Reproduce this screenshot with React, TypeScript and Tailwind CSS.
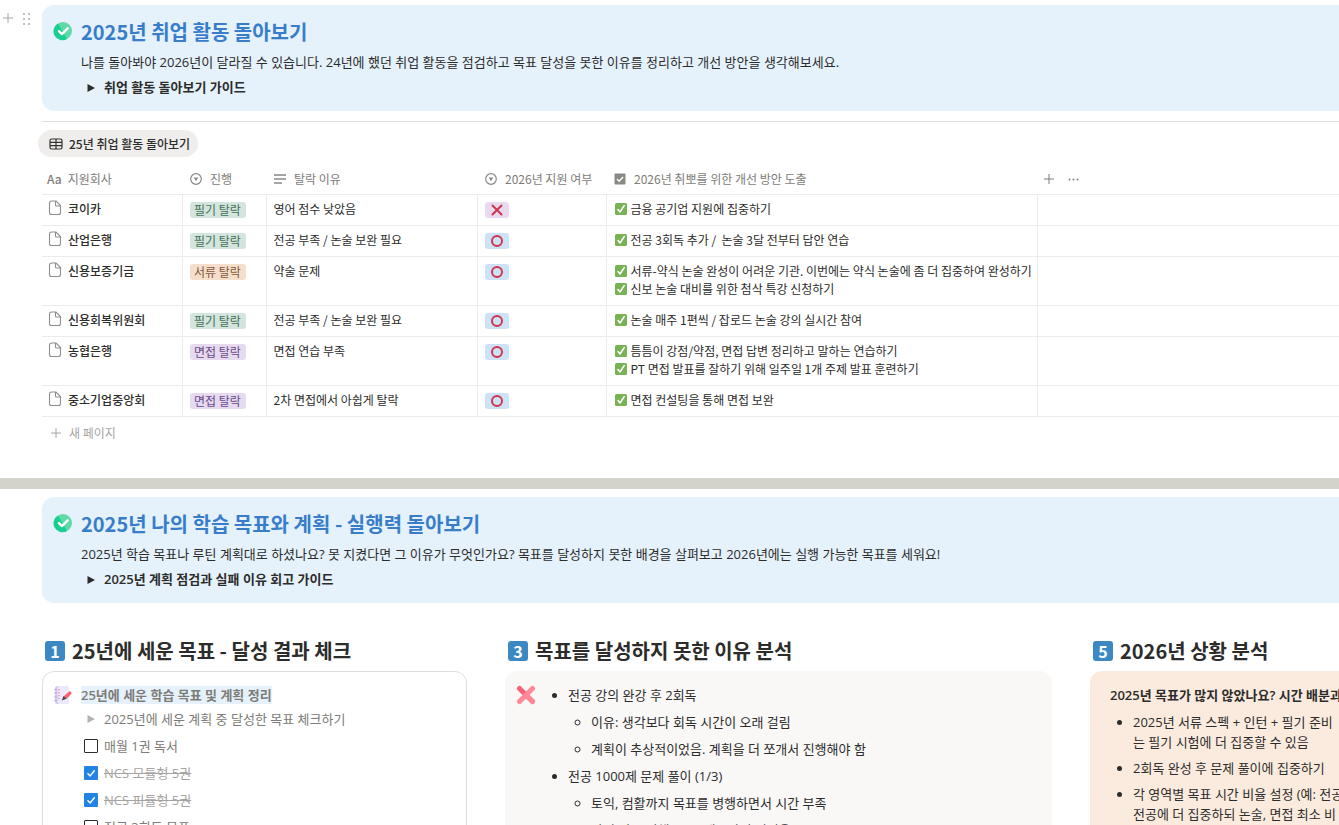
import type { ReactNode } from 'react';

type TagColor = 'green' | 'orange' | 'purple';

const tagStyles: Record<TagColor, string> = {
    green: 'bg-[#d3e5dc] text-[#44705a]',
    orange: 'bg-[#f5dfcc] text-[#85583a]',
    purple: 'bg-[#e6daf1] text-[#6a4a86]',
};

const rows: { company: string; status: string; color: TagColor; reason: string; apply: boolean; plans: string[] }[] = [
    { company: '코이카', status: '필기 탈락', color: 'green', reason: '영어 점수 낮았음', apply: false, plans: ['금융 공기업 지원에 집중하기'] },
    { company: '산업은행', status: '필기 탈락', color: 'green', reason: '전공 부족 / 논술 보완 필요', apply: true, plans: ['전공 3회독 추가 /  논술 3달 전부터 답안 연습'] },
    {
        company: '신용보증기금',
        status: '서류 탈락',
        color: 'orange',
        reason: '약술 문제',
        apply: true,
        plans: ['서류-약식 논술 완성이 어려운 기관. 이번에는 약식 논술에 좀 더 집중하여 완성하기', '신보 논술 대비를 위한 첨삭 특강 신청하기'],
    },
    { company: '신용회복위원회', status: '필기 탈락', color: 'green', reason: '전공 부족 / 논술 보완 필요', apply: true, plans: ['논술 매주 1편씩 / 잡로드 논술 강의 실시간 참여'] },
    {
        company: '농협은행',
        status: '면접 탈락',
        color: 'purple',
        reason: '면접 연습 부족',
        apply: true,
        plans: ['틈틈이 강점/약점, 면접 답변 정리하고 말하는 연습하기', 'PT 면접 발표를 잘하기 위해 일주일 1개 주제 발표 훈련하기'],
    },
    { company: '중소기업중앙회', status: '면접 탈락', color: 'purple', reason: '2차 면접에서 아쉽게 탈락', apply: true, plans: ['면접 컨설팅을 통해 면접 보완'] },
];

const goals = [
    { id: 'reading', label: '매월 1권 독서', done: false },
    { id: 'ncs-module', label: 'NCS 모듈형 5권', done: true },
    { id: 'ncs-pdul', label: 'NCS 피듈형 5권', done: true },
    { id: 'major', label: '전공 3회독 목표', done: false },
];

const CheckCircle = () => (
    <svg viewBox="0 0 20 20" className="mt-[1px] size-5 shrink-0">
        <circle cx="10" cy="10" r="9" fill="#5fdaa6" />
        <path d="M5 2.5a9 9 0 0 0 9 15.6z" fill="#17cf90" />
        <path d="M6 10.2l2.9 2.9 5.8-5.8" fill="none" stroke="#fff" strokeWidth="2.4" strokeLinecap="round" strokeLinejoin="round" />
    </svg>
);

const Notebook = () => (
    <svg viewBox="0 0 20 20" className="size-5 shrink-0">
        <rect x="2" y="1" width="13.5" height="18" rx="2.5" fill="#cfc8f2" />
        <rect x="4.5" y="1" width="11" height="18" rx="2" fill="#eceafa" />
        <path d="M1.5 4.5h2M1.5 8h2M1.5 12h2M1.5 15.5h2" stroke="#b9b1e6" strokeWidth="1" strokeLinecap="round" />
        <path d="M6 4v10" stroke="#ee7f9b" strokeWidth="1.3" strokeDasharray="1.3 1.7" />
        <path d="M10.5 11.5l5-4.6a1.7 1.7 0 0 1 2.5 2.4l-4.6 4.8z" fill="#f4636f" />
        <path d="M10.5 11l2.9 2.8-4.6 1.8z" fill="#4a3b59" />
    </svg>
);

const CrossMark = () => (
    <svg viewBox="0 0 20 20" className="size-5 shrink-0">
        <path d="M3.5 3.5l13 13" stroke="#fb5f76" strokeWidth="5" strokeLinecap="round" />
        <path d="M16.5 3.5l-13 13" stroke="#fd8997" strokeWidth="5" strokeLinecap="round" />
        <path d="M10 10l6.5 6.5" stroke="#fd8997" strokeWidth="5" strokeLinecap="round" />
    </svg>
);

const GreenCheck = () => (
    <svg viewBox="0 0 12 12" className="mr-1 inline-block size-3 align-[-1px]">
        <rect width="12" height="12" rx="1.5" fill="#77b255" />
        <path d="M3 6.6l2 2.4 4.2-6.4" fill="none" stroke="#fff" strokeWidth="1.6" strokeLinecap="round" strokeLinejoin="round" />
    </svg>
);

const PageIcon = () => (
    <svg viewBox="0 0 14 16" className="h-4 w-[14px] shrink-0" fill="none" stroke="#8f8e8b" strokeWidth="1.1">
        <path d="M3.5 1H8l4.5 4.5v7a2 2 0 0 1-2 2h-7a2 2 0 0 1-2-2V3a2 2 0 0 1 2-2z" />
        <path d="M7.5 1v4a1 1 0 0 0 1 1h4" />
    </svg>
);

const SelectIcon = () => (
    <svg viewBox="0 0 12 12" className="size-3">
        <circle cx="6" cy="6" r="5.3" fill="none" stroke="#8a8986" strokeWidth="1.2" />
        <path d="M3.7 4.6h4.6L6 8.2z" fill="#8a8986" />
    </svg>
);

const TextIcon = () => (
    <svg viewBox="0 0 12 12" className="size-3">
        <path d="M0 2h12M0 6h12M0 10h8" stroke="#8a8986" strokeWidth="1.3" />
    </svg>
);

const CheckboxIcon = () => (
    <svg viewBox="0 0 12 12" className="size-3">
        <rect x=".5" y=".5" width="11" height="11" rx="1" fill="#8a8986" />
        <path d="M3 6.1l2.1 2.1 4-4.2" fill="none" stroke="#fff" strokeWidth="1.4" />
    </svg>
);

const TableIcon = () => (
    <svg viewBox="0 0 14 12" className="h-3 w-[14px]" fill="none" stroke="#32302c" strokeWidth="1.2">
        <rect x="1" y="1" width="12" height="10" rx="1.5" />
        <path d="M1 4.3h12M1 7.7h12M7 1v10" />
    </svg>
);

const PlusIcon = () => (
    <svg viewBox="0 0 10 10" className="size-[10px]">
        <path d="M5 0v10M0 5h10" stroke="currentColor" />
    </svg>
);

const Triangle = () => (
    <svg viewBox="0 0 8 8" className="size-2" fill="currentColor">
        <path d="M.5 0L8 4 .5 8z" />
    </svg>
);

const Callout = ({ title, text, guide }: { title: string; text: string; guide: string }) => (
    <div className="flex h-[106px] gap-2 rounded-l-xl bg-[#e5f2fc] pt-[15px] pl-[11px]">
        <CheckCircle />
        <div className="whitespace-nowrap">
            <h2 className="text-xl leading-6 font-semibold text-[#387dc9]">{title}</h2>
            <p className="mt-2 font-['Open_Sans','Noto_Sans_CJK_KR',sans-serif] text-[13px] leading-5">{text}</p>
            <button className="mt-1 flex h-6 items-center gap-[9px] pl-[6px] font-['Open_Sans','Noto_Sans_CJK_KR',sans-serif] text-[13px] font-semibold">
                <Triangle />
                {guide}
            </button>
        </div>
    </div>
);

const ColumnTitle = ({ num, children }: { num: number; children: ReactNode }) => (
    <h3 className="flex h-6 items-center gap-[7px] pl-[3px] font-['Noto_Sans_CJK_KR','Noto_Sans_CJK_SC',sans-serif] text-xl font-semibold whitespace-nowrap">
        <span className="flex size-5 items-center justify-center rounded-[3px] bg-[#3b88c3] text-base leading-none font-bold text-white">{num}</span>
        {children}
    </h3>
);

const HeaderCell = ({ icon, children }: { icon: ReactNode; children: ReactNode }) => (
    <th className="pl-2 font-normal">
        <span className="flex items-center gap-2">
            {icon}
            {children}
        </span>
    </th>
);

const App = () => {
    return (
        <main className="h-screen overflow-hidden bg-white pt-[5px] font-['Noto_Sans_CJK_KR','Noto_Sans_CJK_SC',sans-serif] text-[#2c2c2b]">
            <section className="flex">
                <div className="flex w-[42px] shrink-0 items-start gap-[9px] pt-2 pl-[3px] text-[#a5a4a1]">
                    <button aria-label="블록 추가">
                        <PlusIcon />
                    </button>
                    <button aria-label="블록 이동">
                        <svg viewBox="0 0 8 12" className="h-3 w-2" fill="currentColor">
                            <circle cx="2" cy="1" r=".9" />
                            <circle cx="7" cy="1" r=".9" />
                            <circle cx="2" cy="6" r=".9" />
                            <circle cx="7" cy="6" r=".9" />
                            <circle cx="2" cy="11" r=".9" />
                            <circle cx="7" cy="11" r=".9" />
                        </svg>
                    </button>
                </div>
                <div className="min-w-0 flex-1">
                    <Callout
                        title="2025년 취업 활동 돌아보기"
                        text="나를 돌아봐야 2026년이 달라질 수 있습니다. 24년에 했던 취업 활동을 점검하고 목표 달성을 못한 이유를 정리하고 개선 방안을 생각해보세요."
                        guide="취업 활동 돌아보기 가이드"
                    />
                    <hr className="mt-[10px] border-[#e0e0de]" />
                </div>
            </section>

            {/* Database view */}
            <section className="pt-2 pl-[42px]">
                <button className="-ml-1 flex h-[27px] items-center gap-[6px] rounded-full bg-[#efeeec] pr-2 pl-[11px] text-xs font-medium">
                    <TableIcon />
                    25년 취업 활동 돌아보기
                </button>

                <table className="mt-2 w-full table-fixed border-collapse text-left text-xs leading-[18px] whitespace-nowrap">
                    <colgroup>
                        <col className="w-[140px]" />
                        <col className="w-[84px]" />
                        <col className="w-[211px]" />
                        <col className="w-[129px]" />
                        <col className="w-[431px]" />
                        <col />
                    </colgroup>
                    <thead>
                        <tr className="h-[29px] border-b border-[#ebebe9] text-[#7d7c78]">
                            <th className="pl-[5px] font-normal">
                                <span className="flex items-center gap-[6px]">
                                    <span className="font-medium">Aa</span>
                                    지원회사
                                </span>
                            </th>
                            <HeaderCell icon={<SelectIcon />}>진행</HeaderCell>
                            <HeaderCell icon={<TextIcon />}>탈락 이유</HeaderCell>
                            <HeaderCell icon={<SelectIcon />}>2026년 지원 여부</HeaderCell>
                            <HeaderCell icon={<CheckboxIcon />}>2026년 취뽀를 위한 개선 방안 도출</HeaderCell>
                            <th className="pl-[7px]">
                                <span className="flex items-center gap-[14px]">
                                    <button aria-label="속성 추가">
                                        <PlusIcon />
                                    </button>
                                    <button aria-label="더 보기">
                                        <svg viewBox="0 0 11 3" className="h-[3px] w-[11px]" fill="currentColor">
                                            <circle cx="1.5" cy="1.5" r="1" />
                                            <circle cx="5.5" cy="1.5" r="1" />
                                            <circle cx="9.5" cy="1.5" r="1" />
                                        </svg>
                                    </button>
                                </span>
                            </th>
                        </tr>
                    </thead>
                    <tbody>
                        {rows.map((row) => (
                            <tr key={row.company} className="border-b border-[#ebebe9] align-top">
                                <td className="border-r border-[#ebebe9] pt-[5px] pb-[7px] pl-[6px]">
                                    <span className="flex gap-[6px] font-medium">
                                        <PageIcon />
                                        {row.company}
                                    </span>
                                </td>
                                <td className="border-r border-[#ebebe9] px-[7px] pt-[6px]">
                                    <span className={`mt-[1px] flex h-4 w-14 items-center justify-center rounded-[3px] ${tagStyles[row.color]}`}>{row.status}</span>
                                </td>
                                <td className="border-r border-[#ebebe9] px-[7px] pt-[5px] pb-[7px]">{row.reason}</td>
                                <td className="border-r border-[#ebebe9] px-[7px] pt-[6px]">
                                    <span className={`mt-[1px] flex h-4 w-6 items-center justify-center rounded-[3px] ${row.apply ? 'bg-[#cce3f6]' : 'bg-[#e9daf1]'}`}>
                                        <svg viewBox="0 0 12 12" className="size-3" fill="none" stroke="#cf3550" strokeWidth="2">
                                            {row.apply ? <circle cx="6" cy="6" r="5" /> : <path d="M1.5 1.5l9 9M10.5 1.5l-9 9" strokeLinecap="round" />}
                                        </svg>
                                    </span>
                                </td>
                                <td className="border-r border-[#ebebe9] px-2 pt-[5px] pb-[7px]">
                                    {row.plans.map((plan) => (
                                        <p key={plan} className="whitespace-pre">
                                            <GreenCheck />
                                            {plan}
                                        </p>
                                    ))}
                                </td>
                                <td />
                            </tr>
                        ))}
                    </tbody>
                </table>
                <button className="flex h-8 items-center gap-2 pl-[9px] text-xs text-[#a5a4a1]">
                    <PlusIcon />
                    새 페이지
                </button>
            </section>

            <div className="mt-[29px] h-[11px] bg-[#d3d3cb]" />

            <section className="pt-2 pl-[42px]">
                <Callout
                    title="2025년 나의 학습 목표와 계획 - 실행력 돌아보기"
                    text="2025년 학습 목표나 루틴 계획대로 하셨나요? 못 지켰다면 그 이유가 무엇인가요? 목표를 달성하지 못한 배경을 살펴보고 2026년에는 실행 가능한 목표를 세워요!"
                    guide="2025년 계획 점검과 실패 이유 회고 가이드"
                />

                <div className="mt-9 flex gap-[38px] font-['Open_Sans','Noto_Sans_CJK_KR',sans-serif] text-[13px] leading-5">
                    <div className="w-[425px] shrink-0">
                        <ColumnTitle num={1}>25년에 세운 목표 - 달성 결과 체크</ColumnTitle>
                        <div className="mt-2 flex gap-2 rounded-xl border border-[#dededc] py-[13px] pl-[10px] text-[#7d7c78]">
                            <Notebook />
                            <div>
                                <h4 className="font-semibold">
                                    <mark className="bg-[#e5f2fc] text-[#7d7c78]">25년에 세운 학습 목표 및 계획 정리</mark>
                                </h4>
                                <button className="mt-[2px] flex h-6 items-center gap-[9px] pl-[6px]">
                                    <span className="text-[#b3b2af]">
                                        <Triangle />
                                    </span>
                                    2025년에 세운 계획 중 달성한 목표 체크하기
                                </button>
                                {goals.map((goal) => (
                                    <label key={goal.id} htmlFor={goal.id} className="mt-[3px] flex h-6 items-center gap-[6px] pl-[3px]">
                                        <span className="grid size-[14px]">
                                            <input
                                                id={goal.id}
                                                type="checkbox"
                                                defaultChecked={goal.done}
                                                className="peer col-start-1 row-start-1 size-[14px] appearance-none rounded-[1px] border border-[#2c2c2b] checked:border-0 checked:bg-[#2383e2]"
                                            />
                                            <svg viewBox="0 0 14 14" className="pointer-events-none invisible col-start-1 row-start-1 peer-checked:visible" fill="none" stroke="#fff" strokeWidth="1.4">
                                                <path d="M3.5 7.3l2.6 2.6 4.6-5.6" />
                                            </svg>
                                        </span>
                                        <span className={goal.done ? 'text-[#a5a4a1] line-through' : ''}>{goal.label}</span>
                                    </label>
                                ))}
                            </div>
                        </div>
                    </div>

                    <div className="w-[547px] shrink-0">
                        <ColumnTitle num={3}>목표를 달성하지 못한 이유 분석</ColumnTitle>
                        <div className="mt-2 flex gap-[10px] rounded-xl bg-[#f9f8f7] py-[14px] pl-[11px]">
                            <CrossMark />
                            <ul className="list-disc space-y-[7px] pl-[22px]">
                                <li>
                                    전공 강의 완강 후 2회독
                                    <ul className="mt-[7px] list-[circle] space-y-[7px] pl-[23px]">
                                        <li>이유: 생각보다 회독 시간이 오래 걸림</li>
                                        <li>계획이 추상적이었음. 계획을 더 쪼개서 진행해야 함</li>
                                    </ul>
                                </li>
                                <li>
                                    전공 1000제 문제 풀이 (1/3)
                                    <ul className="mt-[7px] list-[circle] space-y-[7px] pl-[23px]">
                                        <li>토익, 컴활까지 목표를 병행하면서 시간 부족</li>
                                        <li>아직 전공 이해 부족, 재무관리 어려움</li>
                                    </ul>
                                </li>
                            </ul>
                        </div>
                    </div>

                    <div className="min-w-0 flex-1 whitespace-nowrap">
                        <ColumnTitle num={5}>2026년 상황 분석</ColumnTitle>
                        <div className="mt-2 overflow-hidden rounded-l-xl bg-[#fbebde] py-[14px] pl-5">
                            <h4 className="font-semibold">2025년 목표가 많지 않았나요? 시간 배분과</h4>
                            <ul className="mt-[7px] list-disc space-y-[6px] pl-[23px]">
                                <li>
                                    2025년 서류 스펙 + 인턴 + 필기 준비
                                    <br />는 필기 시험에 더 집중할 수 있음
                                </li>
                                <li>2회독 완성 후 문제 풀이에 집중하기</li>
                                <li>
                                    각 영역별 목표 시간 비율 설정 (예: 전공
                                    <br />
                                    전공에 더 집중하되 논술, 면접 최소 비
                                </li>
                            </ul>
                        </div>
                    </div>
                </div>
            </section>
        </main>
    );
};

export default App;
